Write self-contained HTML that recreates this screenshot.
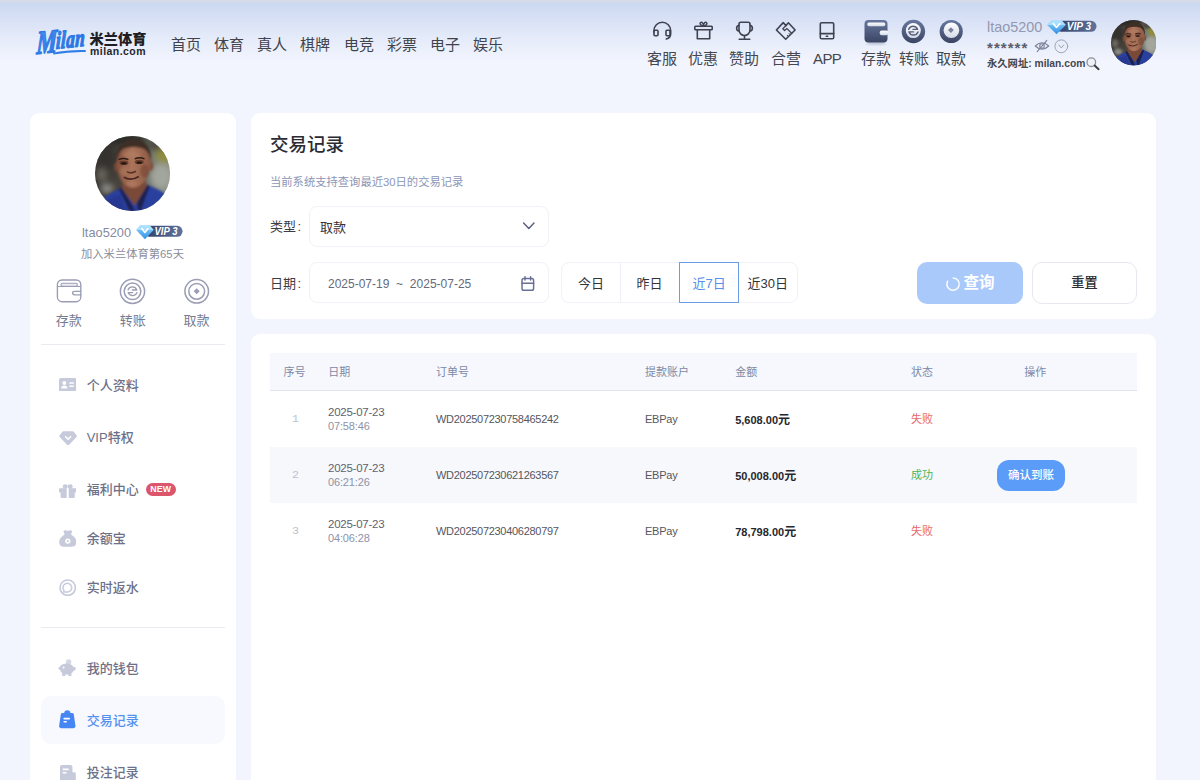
<!DOCTYPE html>
<html lang="zh-CN">
<head>
<meta charset="utf-8">
<title>交易记录</title>
<style>
*{box-sizing:border-box;margin:0;padding:0}
html,body{width:1200px;height:780px;overflow:hidden}
body{position:relative;background:#f2f5fe;font-family:"Liberation Sans","Noto Sans CJK SC",sans-serif;color:#333;font-size:13px}
.abs{position:absolute}
.t{position:absolute;white-space:nowrap;line-height:1}
#hdr{position:absolute;left:0;top:0;width:1200px;height:70px;background:linear-gradient(#cad6f1 0,#d7e0f5 18px,#e5ebf9 38px,#f2f5fe 62px)}
#hdr:before{content:"";position:absolute;left:0;top:0;width:100%;height:4px;background:linear-gradient(#d6dce7 0,#d3dbea 2px,rgba(204,216,242,0) 4px)}
.nav{font-size:15px;color:#42444d;top:36.6px}
.hl{font-size:15px;color:#45474f;top:51px}
.card{position:absolute;background:#fff;border-radius:9px}
.mi{font-size:13px;color:#6c7088;font-weight:500;left:86.7px}
.th{font-size:11px;color:#8089a6}
.td{font-size:11.5px;color:#555}
</style>
</head>
<body>
<div id="hdr"></div>

<!-- NAV -->
<div class="t nav" style="left:171px">首页</div>
<div class="t nav" style="left:214px">体育</div>
<div class="t nav" style="left:257px">真人</div>
<div class="t nav" style="left:300px">棋牌</div>
<div class="t nav" style="left:344px">电竞</div>
<div class="t nav" style="left:387px">彩票</div>
<div class="t nav" style="left:430px">电子</div>
<div class="t nav" style="left:473px">娱乐</div>

<div class="t hl" style="left:647px">客服</div>
<div class="t hl" style="left:688px">优惠</div>
<div class="t hl" style="left:729px">赞助</div>
<div class="t hl" style="left:771px">合营</div>
<div class="t hl" style="left:813px;letter-spacing:-.6px">APP</div>
<div class="t hl" style="left:861px">存款</div>
<div class="t hl" style="left:899px">转账</div>
<div class="t hl" style="left:936px">取款</div>


<!-- shared defs -->
<svg width="0" height="0" style="position:absolute">
<defs>
<filter id="bl1" x="-20%" y="-20%" width="140%" height="140%"><feGaussianBlur stdDeviation="1.6"/></filter>
<filter id="bl2" x="-20%" y="-20%" width="140%" height="140%"><feGaussianBlur stdDeviation="4"/></filter>
<filter id="bl3" x="-20%" y="-20%" width="140%" height="140%"><feGaussianBlur stdDeviation="0.8"/></filter>
<clipPath id="avc"><circle cx="50" cy="50" r="50"/></clipPath>
<linearGradient id="bgA" x1="0" y1="0" x2="1" y2="0"><stop offset="0" stop-color="#33312d"/><stop offset=".35" stop-color="#4a443c"/><stop offset=".7" stop-color="#6f746a"/><stop offset="1" stop-color="#8b9186"/></linearGradient>
<linearGradient id="skin" x1="0" y1="0" x2="1" y2="0"><stop offset="0" stop-color="#82503d"/><stop offset=".45" stop-color="#ab755b"/><stop offset="1" stop-color="#8d5a45"/></linearGradient>
<symbol id="avatar" viewBox="0 0 100 100">
<g clip-path="url(#avc)">
<rect width="100" height="100" fill="url(#bgA)"/>
<g filter="url(#bl2)">
<ellipse cx="92" cy="24" rx="11" ry="13" fill="#8f8d3a"/>
<ellipse cx="88" cy="54" rx="14" ry="17" fill="#a3a69d"/>
<ellipse cx="80" cy="12" rx="12" ry="8" fill="#4b4a42"/>
<ellipse cx="14" cy="30" rx="14" ry="18" fill="#35332f"/>
<ellipse cx="9" cy="52" rx="7" ry="9" fill="#6b675e"/>
<ellipse cx="16" cy="70" rx="9" ry="7" fill="#8b8c88"/>
<ellipse cx="40" cy="5" rx="30" ry="8" fill="#2b2a27"/>
</g>
<g filter="url(#bl1)">
<path d="M-5 105 L6 86 Q18 77 35 69 L50 86 L69 65 Q86 71 96 79 L105 105Z" fill="#2c409f"/>
<path d="M6 92 Q20 82 34 78 L40 100 L0 100Z" fill="#23358b" opacity=".7"/>
<path d="M38 56 L66 54 L69 67 L53 93 L36 70Z" fill="#7a4a37"/>
<path d="M35 68 L50 93 L53 100 L58 100 L56 89 L70 65 L73 67 L61 100 L46 100 L32 71Z" fill="#1a2250"/>
<ellipse cx="28.8" cy="41" rx="3.4" ry="6.2" fill="#774634"/>
<ellipse cx="74.2" cy="40" rx="3.4" ry="6.2" fill="#80503c"/>
<path d="M29 32 Q29 12 51 10 Q73 12 74 32 Q74.5 48 68 58 Q60 69 50.5 69 Q41 69 34 58 Q28.5 48 29 32Z" fill="url(#skin)"/>
<path d="M28.5 36 Q26.5 15 39 7.5 Q51 1.5 63.5 7 Q76 14 75 35 Q72.5 21.5 65 17 Q52 12.5 38 17 Q31 21 28.5 36Z" fill="#3e2f28"/>
<ellipse cx="49" cy="25" rx="12" ry="4.5" fill="#b57f64" opacity=".55"/>
<ellipse cx="39" cy="47" rx="6" ry="6" fill="#b47c62" opacity=".5"/>
<ellipse cx="66" cy="47" rx="6" ry="9" fill="#6f4231" opacity=".5"/>
</g>
<g filter="url(#bl3)">
<ellipse cx="38.5" cy="35.5" rx="6" ry="3" fill="#5d3527" opacity=".8"/>
<ellipse cx="59" cy="34.5" rx="6" ry="3" fill="#5d3527" opacity=".8"/>
<ellipse cx="38.5" cy="36.5" rx="3.8" ry="1.6" fill="#23140f"/>
<ellipse cx="59" cy="35.5" rx="3.8" ry="1.6" fill="#23140f"/>
<path d="M31.5 31.5 Q38 28.5 44.5 31.5" stroke="#2e1c16" stroke-width="2" fill="none"/>
<path d="M53 30.5 Q59.5 27.5 66 30.5" stroke="#2e1c16" stroke-width="2" fill="none"/>
<path d="M42.5 47.5 Q48 51 54.5 47" stroke="#5a3326" stroke-width="2.2" fill="none"/>
<path d="M38.5 55 Q48 60.5 58.5 54" stroke="#4a2820" stroke-width="2.2" fill="none"/>
<ellipse cx="49" cy="63.5" rx="7" ry="2.6" fill="#b27b62" opacity=".45"/>
</g>
</g>
</symbol>
<linearGradient id="gdk" x1="0" y1="0" x2="0" y2="1"><stop offset="0" stop-color="#67779f"/><stop offset="1" stop-color="#3b4563"/></linearGradient>
<linearGradient id="glt" x1="0" y1="0" x2="0" y2="1"><stop offset="0" stop-color="#ffffff"/><stop offset="1" stop-color="#d5dbe8"/></linearGradient>
<linearGradient id="gvip" x1="0" y1="0" x2="1" y2="0"><stop offset="0" stop-color="#31406a"/><stop offset="1" stop-color="#62739b"/></linearGradient>
<linearGradient id="gdia" x1="0" y1="0" x2="0" y2="1"><stop offset="0" stop-color="#8fd6ff"/><stop offset="1" stop-color="#2f8fe6"/></linearGradient>
<linearGradient id="glogo" x1="0" y1="0" x2="1" y2="1"><stop offset="0" stop-color="#4f9bf5"/><stop offset="1" stop-color="#1f5fd6"/></linearGradient>
<symbol id="vip" viewBox="0 0 50 15">
<rect x="9" y="0.8" width="40.5" height="11" rx="5.5" fill="url(#gvip)"/>
<path d="M4.5 0.3 H14.5 L18.8 5 L9.5 14.3 L0.2 5Z" fill="url(#gdia)"/>
<path d="M4.5 0.3 H14.5 L18.8 5 H0.2Z" fill="#b9e6ff" opacity=".75"/>
<path d="M6.3 3.6 L9.5 7.4 L12.7 3.6" stroke="#fff" stroke-width="1.7" fill="none" stroke-linecap="round" stroke-linejoin="round"/>
<text x="31.9" y="10.4" font-family="Liberation Sans,sans-serif" font-size="10.9" font-weight="bold" font-style="italic" fill="#fff" text-anchor="middle" textLength="24.4" lengthAdjust="spacingAndGlyphs">VIP 3</text>
</symbol>
</defs>
</svg>

<!-- LOGO -->
<svg class="abs" style="left:30px;top:20px" width="62" height="44" viewBox="30 20 62 44">
<g transform="translate(36.3 51) rotate(-6) skewX(-8) scale(.7 1)">
<text x="0" y="0" font-family="Liberation Serif,serif" font-style="italic" font-weight="bold" fill="url(#glogo)" stroke="#2f7ae6" stroke-width="1.4" stroke-linejoin="round"><tspan font-size="33" dy="3">M</tspan><tspan font-size="24.5" dy="-3.2" dx="-1.5" letter-spacing=".6">ilan</tspan></text>
</g>
<path d="M53 52.8 Q68 49.5 85.5 50 Q86.3 51 85.6 52 Q70 51.5 53.4 54.6Z" fill="#2f7de8"/>
</svg>
<div class="t" style="left:89.6px;top:31.6px;font-size:14.2px;font-weight:900;color:#1e1f24">米兰体育</div>
<div class="t" style="left:90px;top:45.6px;font-size:10.5px;font-weight:bold;color:#25262b;letter-spacing:.45px">milan.com</div>

<!-- HEADER ICONS -->
<svg class="abs" style="left:652px;top:20px" width="21" height="21" viewBox="0 0 21 21" fill="none" stroke="#3f4250" stroke-width="1.6" stroke-linecap="round" stroke-linejoin="round">
<path d="M1.9 12 V10.7 A8.4 8.4 0 0 1 18.7 10.7 V13.5 Q18.7 18 14.3 19"/>
<rect x="2" y="10.3" width="4" height="5.4" rx="1"/>
<rect x="14" y="10.3" width="4" height="5.4" rx="1"/>
</svg>
<svg class="abs" style="left:693px;top:20px" width="21" height="21" viewBox="0 0 21 21" fill="none" stroke="#3f4250" stroke-width="1.6" stroke-linecap="round" stroke-linejoin="round">
<rect x="1.8" y="6.3" width="17.4" height="3.4" rx=".8"/>
<path d="M4.3 9.7 V18.7 H16.7 V9.7"/>
<path d="M10.5 6 C8 6 5.8 3.2 7.8 2.3 C9.3 1.7 10.5 4 10.5 6 C10.5 4 11.7 1.7 13.2 2.3 C15.2 3.2 13 6 10.5 6Z" stroke-width="1.4"/>
</svg>
<svg class="abs" style="left:734px;top:20px" width="22" height="21" viewBox="0 0 22 21" fill="none" stroke="#3f4250" stroke-width="1.6" stroke-linecap="round" stroke-linejoin="round">
<path d="M6.8 2.3 H14.2 Q16 2.3 16 4 V10 A5.5 5.5 0 0 1 5 10 V4 Q5 2.3 6.8 2.3Z"/>
<path d="M5 5.3 A2.9 2.9 0 0 0 5 11"/>
<path d="M16 5.3 A2.9 2.9 0 0 1 16 11"/>
<path d="M10.5 15.6 V19 M5.2 19.2 H15.8"/>
</svg>
<svg class="abs" style="left:774px;top:20px" width="23" height="21" viewBox="0 0 23 21" fill="none" stroke="#3f4250" stroke-width="1.6" stroke-linecap="round" stroke-linejoin="round">
<path d="M11.7 19.3 L2.4 10 L9.2 2.6 L12 5.6 L14.4 2.8 L21.1 10Z"/>
<path d="M12 5.6 L8.8 8.8 L10.6 10.6 L13 8.6 L17.6 13.2" stroke-width="1.3"/>
<path d="M13.2 15.2 l1 1 M15 13.5 l1 1" stroke-width="1"/>
</svg>
<svg class="abs" style="left:818px;top:20px" width="18" height="21" viewBox="0 0 18 21" fill="none" stroke="#3f4250" stroke-width="1.6" stroke-linecap="round" stroke-linejoin="round">
<rect x="2.3" y="2.8" width="13.4" height="16" rx="1.3"/>
<path d="M2.3 13.6 H15.7"/>
<path d="M8.2 16.3 H9.8" stroke-width="1.4"/>
</svg>

<!-- wallet / transfer / withdraw (filled) -->
<svg class="abs" style="left:860px;top:16px" width="110" height="32" viewBox="0 0 110 32">
<ellipse cx="16" cy="27" rx="10" ry="1.6" fill="#5a6788" opacity=".35" filter="url(#bl3)"/>
<rect x="4.5" y="4" width="23" height="22.5" rx="4" fill="url(#gdk)"/>
<rect x="7.3" y="6.4" width="18" height="3.8" rx="1.6" fill="url(#glt)"/>
<rect x="19.8" y="14.4" width="8.4" height="4.8" rx="1.8" fill="url(#glt)"/>
<circle cx="53.4" cy="15.5" r="11.7" fill="url(#gdk)"/>
<circle cx="53.3" cy="14.6" r="7.5" fill="url(#glt)"/>
<path d="M48.6 13.4 A4.8 4.8 0 0 1 57.6 13.4 H53 M58 15.9 A4.8 4.8 0 0 1 49 15.9 H53.6" stroke="#55607f" stroke-width="1.4" fill="none" stroke-linecap="round" stroke-linejoin="round"/>
<circle cx="91.2" cy="15.5" r="11.6" fill="url(#gdk)"/>
<circle cx="91.4" cy="14.3" r="7.8" fill="url(#glt)"/>
<path d="M90.9 11.2 L93.8 14.1 L90.9 17 L88 14.1Z" fill="#707997" opacity=".9"/>
</svg>

<!-- USER -->
<div class="t" style="left:987px;top:19.8px;font-size:14.4px;color:#9298b0">ltao5200</div>
<svg class="abs" style="left:1046.5px;top:20px" width="50" height="15"><use href="#vip"/></svg>
<div class="t" style="left:987px;top:40.4px;font-size:15px;font-weight:bold;color:#5a5d6c;letter-spacing:1.06px">******</div>
<svg class="abs" style="left:1034px;top:39px" width="16" height="14" viewBox="0 0 16 14" fill="none" stroke="#7c819a" stroke-width="1.1" stroke-linecap="round">
<path d="M1.3 7 Q8 0.5 14.7 7 Q8 13.5 1.3 7Z"/><circle cx="8" cy="7" r="2.3"/><path d="M3.2 12.6 L12.8 1.4"/>
</svg>
<svg class="abs" style="left:1054px;top:39px" width="15" height="15" viewBox="0 0 15 15" fill="none" stroke="#9ea2b5" stroke-width="1" stroke-linecap="round" stroke-linejoin="round">
<circle cx="7.3" cy="7.3" r="6.4"/><path d="M4.9 6 L7.3 9 L9.7 6"/>
</svg>
<div class="t" style="left:987px;top:58.5px;font-size:10.3px;font-weight:bold;color:#45464e">永久网址: milan.com</div>
<svg class="abs" style="left:1085px;top:56px" width="16" height="15" viewBox="0 0 16 15" fill="none">
<circle cx="6.3" cy="6.2" r="4.3" stroke="#8e9097" stroke-width="1.3" fill="#eef1f8"/>
<path d="M9.6 9.6 L13.6 13.2" stroke="#3c3d42" stroke-width="2" stroke-linecap="round"/>
</svg>
<svg class="abs" style="left:1110.6px;top:20.4px" width="45.4" height="45.4"><use href="#avatar"/></svg>

<!-- SIDEBAR -->
<div class="card" id="side" style="left:30px;top:113.3px;width:205.5px;height:700px"></div>
<svg class="abs" style="left:94.8px;top:136.1px" width="75" height="75"><use href="#avatar"/></svg>
<div class="t" style="left:82px;top:226.8px;font-size:12.8px;color:#868ba0">ltao5200</div>
<svg class="abs" style="left:136.3px;top:225.3px" width="47" height="15" viewBox="0 0 50 15" preserveAspectRatio="none"><use href="#vip"/></svg>
<div class="t" style="left:81px;top:249px;font-size:11.3px;color:#8a8d9d">加入米兰体育第65天</div>

<svg class="abs" style="left:55px;top:277px" width="28" height="28" viewBox="0 0 28 28" fill="none" stroke="#9a9db4" stroke-width="1.35" stroke-linecap="round" stroke-linejoin="round">
<rect x="2.4" y="3" width="23.4" height="21.7" rx="4.6"/>
<rect x="6" y="6.3" width="16.4" height="3" rx="1.5" fill="#eceef4" stroke-width="1.1"/>
<path d="M2.6 9.5 H25.6" stroke-width="1.1"/>
<path d="M25.8 14.3 H19.6 Q17.6 14.3 17.6 16.1 Q17.6 17.9 19.6 17.9 H25.8"/>
</svg>
<svg class="abs" style="left:118px;top:277px" width="29" height="29" viewBox="0 0 29 29" fill="none" stroke="#9a9db4" stroke-width="1.5" stroke-linecap="round" stroke-linejoin="round">
<circle cx="14.5" cy="14.3" r="12.1"/><circle cx="14.5" cy="14.3" r="8.3"/>
<path d="M10 13 A4.7 4.7 0 0 1 18.8 13 H14.3 M19 15.6 A4.7 4.7 0 0 1 10.2 15.6 H14.7" stroke-width="1.3"/>
</svg>
<svg class="abs" style="left:182px;top:277px" width="29" height="29" viewBox="0 0 29 29" fill="none" stroke="#9a9db4" stroke-width="1.5" stroke-linecap="round" stroke-linejoin="round">
<circle cx="14.7" cy="14.3" r="11.8"/><circle cx="14.7" cy="14.3" r="7.9"/>
<path d="M14.7 11.3 L17.7 14.3 L14.7 17.3 L11.7 14.3Z" fill="#9a9db4" stroke="none"/>
</svg>
<div class="t" style="left:55.8px;top:313.5px;font-size:13px;color:#777b90">存款</div>
<div class="t" style="left:119.8px;top:313.5px;font-size:13px;color:#777b90">转账</div>
<div class="t" style="left:183.6px;top:313.5px;font-size:13px;color:#777b90">取款</div>
<div class="abs" style="left:41px;top:344px;width:184px;height:1px;background:#e9ebf1"></div>

<!-- menu icons -->
<svg class="abs" style="left:58.8px;top:377.9px" width="17.4" height="13.6" viewBox="0 0 17.4 13.6">
<rect width="17.4" height="13.6" rx="1.8" fill="#c6cadb"/>
<circle cx="5.3" cy="5" r="1.9" fill="#fff"/><path d="M2.2 10.6 Q2.2 7.6 5.3 7.6 Q8.4 7.6 8.4 10.6Z" fill="#fff"/>
<rect x="10.3" y="4.3" width="4.6" height="1.5" rx=".5" fill="#fff"/><rect x="10.3" y="7.6" width="4.6" height="1.5" rx=".5" fill="#fff"/>
</svg>
<svg class="abs" style="left:58.5px;top:430.6px" width="18.2" height="14.8" viewBox="0 0 18.2 14.8">
<path d="M4.4 0.3 H13.8 Q14.5 0.3 15 .9 L17.7 4.6 Q18.2 5.4 17.5 6.1 L10 14 Q9.1 14.8 8.2 14 L.7 6.1 Q0 5.4 .5 4.6 L3.2 .9 Q3.7 .3 4.4 .3Z" fill="#c6cadb"/>
<path d="M6.6 5.7 L9.1 8.3 L11.6 5.7" stroke="#fff" stroke-width="1.6" fill="none" stroke-linecap="round" stroke-linejoin="round"/>
</svg>
<svg class="abs" style="left:59px;top:483.6px" width="17.4" height="14.4" viewBox="0 0 17.4 14.4">
<path d="M0.8 4.3 H7.7 V14.2 H3 Q1.6 14.2 1.6 12.8 V8.6 H.8 Q0 8.6 0 7.8 V5.1 Q0 4.3 .8 4.3Z M9.7 4.3 H16.6 Q17.4 4.3 17.4 5.1 V7.8 Q17.4 8.6 16.6 8.6 H15.8 V12.8 Q15.8 14.2 14.4 14.2 H9.7Z" fill="#c6cadb"/>
<ellipse cx="6.2" cy="2.5" rx="2.5" ry="2.3" fill="#c6cadb"/><ellipse cx="11.2" cy="2.5" rx="2.5" ry="2.3" fill="#c6cadb"/>
</svg>
<div class="abs" style="left:146.3px;top:482.9px;width:30px;height:13.1px;border-radius:7px;background:#db566b"></div>
<div class="t" style="left:150.3px;top:485.2px;font-size:8.8px;font-weight:bold;color:#fff;letter-spacing:.1px">NEW</div>
<svg class="abs" style="left:58.6px;top:529.6px" width="17.6" height="17" viewBox="0 0 17.6 17">
<path d="M5.6 4.4 L4.6 1.8 Q4.2 .5 5.6 .4 Q7.2 .2 8.8 .9 Q10.4 .2 12 .4 Q13.4 .5 13 1.8 L12 4.4 Q17.6 7.6 17.4 12.2 Q17.2 16.8 12.6 16.8 H5 Q.4 16.8 .2 12.2 Q0 7.6 5.6 4.4Z" fill="#c6cadb"/>
<circle cx="8.8" cy="11.1" r="2.7" fill="#fff"/><circle cx="8.8" cy="11.1" r="1" fill="#c6cadb"/>
</svg>
<svg class="abs" style="left:59px;top:578.6px" width="17.4" height="17.4" viewBox="0 0 17.4 17.4" fill="none" stroke="#c6cadb">
<circle cx="8.7" cy="8.7" r="7.7" stroke-width="1.6"/>
<path d="M5 11.6 A4.4 4.4 0 1 1 8.7 13.1 H4.4" stroke-width="1.5" stroke-linecap="round" stroke-linejoin="round"/>
</svg>
<div class="t mi" style="top:378.9px">个人资料</div>
<div class="t mi" style="top:431px">VIP特权</div>
<div class="t mi" style="top:482.8px">福利中心</div>
<div class="t mi" style="top:532.3px">余额宝</div>
<div class="t mi" style="top:581.3px">实时返水</div>
<div class="abs" style="left:41px;top:626.5px;width:184px;height:1px;background:#e9ebf1"></div>

<svg class="abs" style="left:58.4px;top:658.6px" width="17.8" height="17.6" viewBox="0 0 17.8 17.6">
<circle cx="10.6" cy="2.9" r="2.7" fill="#d4d7e4"/>
<path d="M3 6.2 Q5 4.4 8.6 4.4 Q12.4 4.4 14.4 6.6 L15.4 8 H16.8 Q17.6 8 17.6 8.8 V10.6 Q17.6 11.4 16.8 11.4 H15.6 Q15 13.2 13.4 14.3 V16.4 Q13.4 17.2 12.6 17.2 H11.2 Q10.4 17.2 10.4 16.4 V15.5 H7.2 V16.4 Q7.2 17.2 6.4 17.2 H5 Q4.2 17.2 4.2 16.4 V14.2 Q2.6 13 2.2 11 L.6 9.9 Q0 9.5 .4 8.9 L1.8 7.7 Q2.2 6.9 3 6.2Z" fill="#c6cadb"/>
<circle cx="5.6" cy="8.5" r=".9" fill="#fff"/>
</svg>
<div class="abs" style="left:41px;top:696px;width:184px;height:48.4px;border-radius:10px;background:#f7f9fe"></div>
<svg class="abs" style="left:59.2px;top:710.2px" width="16.6" height="18.4" viewBox="0 0 16.6 18.4">
<path d="M5.2 3 Q5.4 .2 8.3 .2 Q11.2 .2 11.4 3 H13.2 Q14.6 3 14.8 4.4 L16.5 16 Q16.7 18.2 14.6 18.2 H2 Q-.1 18.2 .1 16 L1.8 4.4 Q2 3 3.4 3Z" fill="#4586f3"/>
<rect x="4.4" y="7.8" width="6.6" height="1.7" rx=".8" fill="#fff"/><rect x="4.4" y="10.9" width="3.6" height="1.7" rx=".8" fill="#fff"/>
</svg>
<svg class="abs" style="left:59.6px;top:765.4px" width="16" height="16" viewBox="0 0 16 16">
<path d="M1.8 0 H10.6 Q12.4 0 12.4 1.8 V7.2 H14.4 Q15.8 7.2 15.8 8.6 V16 H0 V1.8 Q0 0 1.8 0Z" fill="#c6cadb"/>
<rect x="2.6" y="3.6" width="6.2" height="1.6" rx=".6" fill="#fff"/><rect x="2.6" y="7" width="4" height="1.6" rx=".6" fill="#fff"/>
</svg>
<div class="t mi" style="top:661.5px">我的钱包</div>
<div class="t mi" style="top:713.8px;color:#5590f0">交易记录</div>
<div class="t mi" style="top:766.3px">投注记录</div>

<!-- MAIN CARD 1 -->
<div class="card" id="c1" style="left:250.5px;top:113.3px;width:905.5px;height:205.7px"></div>
<div class="t" style="left:270px;top:135.5px;font-size:18.5px;font-weight:500;color:#2b2c33">交易记录</div>
<div class="t" style="left:270px;top:177.2px;font-size:11.3px;color:#8c96b6">当前系统支持查询最近30日的交易记录</div>
<div class="t" style="left:270px;top:220px;font-size:13px;color:#3c3d45">类型<span style="margin-left:1.5px">:</span></div>
<div class="abs" style="left:309px;top:206px;width:240px;height:40.5px;border:1px solid #f0f2f8;border-radius:8px;background:#fff"></div>
<div class="t" style="left:320px;top:220.5px;font-size:13px;color:#33343a">取款</div>
<svg class="abs" style="left:521px;top:220px" width="16" height="12" viewBox="0 0 16 12" fill="none" stroke="#5b6183" stroke-width="1.5" stroke-linecap="round" stroke-linejoin="round"><path d="M2.6 3 L7.8 8.4 L13 3"/></svg>
<div class="t" style="left:270px;top:276.5px;font-size:13px;color:#3c3d45">日期<span style="margin-left:1.5px">:</span></div>
<div class="abs" style="left:309px;top:262.2px;width:240px;height:41.2px;border:1px solid #f0f2f8;border-radius:8px;background:#fff"></div>
<div class="t" style="left:328px;top:278px;font-size:12px;color:#666a7a;word-spacing:3.4px">2025-07-19 ~ 2025-07-25</div>
<svg class="abs" style="left:520px;top:274.8px" width="16" height="18" viewBox="0 0 16 18" fill="none" stroke="#6a7098" stroke-width="1.5" stroke-linecap="round" stroke-linejoin="round">
<rect x="2" y="3.6" width="11.6" height="11.6" rx="1.8"/><path d="M2 8.2 H13.6 M5 1.8 V5 M10.6 1.8 V5"/>
</svg>
<div class="abs" style="left:561px;top:262.2px;width:237px;height:41.2px;border:1px solid #f0f2f8;border-radius:8px;background:#fff"></div>
<div class="abs" style="left:620px;top:263px;width:1px;height:39.5px;background:#eef0f6"></div>
<div class="abs" style="left:679px;top:262.2px;width:60px;height:41.2px;border:1px solid #6b9de6;background:#fff"></div>
<div class="t" style="left:578px;top:277.4px;font-size:13px;color:#33343a">今日</div>
<div class="t" style="left:636.5px;top:277.4px;font-size:13px;color:#33343a">昨日</div>
<div class="t" style="left:692.5px;top:277.4px;font-size:13px;color:#5590ea">近7日</div>
<div class="t" style="left:747.5px;top:277.4px;font-size:13px;color:#33343a">近30日</div>
<div class="abs" style="left:917px;top:262px;width:105.5px;height:41.5px;border-radius:10px;background:#a9c9fb"></div>
<svg class="abs" style="left:945px;top:275.5px" width="16" height="16" viewBox="0 0 16 16" fill="none" stroke="#fff" stroke-width="1.5" stroke-linecap="round"><path d="M8.2 1.9 A6.2 6.2 0 1 1 2.6 5.2" opacity=".95"/></svg>
<div class="t" style="left:963.5px;top:275px;font-size:15.5px;font-weight:bold;color:#fff">查询</div>
<div class="abs" style="left:1032px;top:262px;width:105px;height:41.5px;border:1px solid #e6e8ef;border-radius:10px;background:#fff"></div>
<div class="t" style="left:1071.3px;top:276px;font-size:13.2px;font-weight:500;color:#2e2f35">重置</div>

<!-- MAIN CARD 2 -->
<div class="card" id="c2" style="left:250.5px;top:333.5px;width:905.5px;height:500px"></div>
<div class="abs" style="left:269.5px;top:352.5px;width:867.5px;height:38px;background:#f6f8fd;border-bottom:1px solid #dfe4ef"></div>
<div class="abs" style="left:269.5px;top:446.5px;width:867.5px;height:56px;background:#f7f8fc"></div>
<div class="t th" style="left:283.4px;top:366.5px">序号</div>
<div class="t th" style="left:328.3px;top:366.5px">日期</div>
<div class="t th" style="left:436px;top:366.5px">订单号</div>
<div class="t th" style="left:645px;top:366.5px">提款账户</div>
<div class="t th" style="left:735.2px;top:366.5px">金额</div>
<div class="t th" style="left:911px;top:366.5px">状态</div>
<div class="t th" style="left:1024.3px;top:366.5px">操作</div>
<div class="t" style="left:292px;top:413.2px;font-size:11.5px;color:#bcc0cf;font-family:'Liberation Mono','Liberation Sans',monospace">1</div>
<div class="t td" style="left:328px;top:406.6px;letter-spacing:-.25px;color:#5f6270">2025-07-23</div>
<div class="t td" style="left:328px;top:421.1px;font-size:11px;letter-spacing:-.15px;color:#8d92a9">07:58:46</div>
<div class="t td" style="left:436px;top:413.9px;font-size:11px;letter-spacing:-.29px;color:#55565e">WD202507230758465242</div>
<div class="t td" style="left:645px;top:413.9px;font-size:11px;letter-spacing:-.25px;color:#55565e">EBPay</div>
<div class="t" style="left:735.2px;top:414.0px;font-size:11px;font-weight:bold;color:#26272c">5,608.00<span style="font-size:12px">元</span></div>
<div class="t" style="left:911px;top:414.3px;font-size:11px;color:#e8686b">失败</div>
<div class="t" style="left:292px;top:469.2px;font-size:11.5px;color:#bcc0cf;font-family:'Liberation Mono','Liberation Sans',monospace">2</div>
<div class="t td" style="left:328px;top:462.6px;letter-spacing:-.25px;color:#5f6270">2025-07-23</div>
<div class="t td" style="left:328px;top:477.1px;font-size:11px;letter-spacing:-.15px;color:#8d92a9">06:21:26</div>
<div class="t td" style="left:436px;top:469.9px;font-size:11px;letter-spacing:-.29px;color:#55565e">WD202507230621263567</div>
<div class="t td" style="left:645px;top:469.9px;font-size:11px;letter-spacing:-.25px;color:#55565e">EBPay</div>
<div class="t" style="left:735.2px;top:470.0px;font-size:11px;font-weight:bold;color:#26272c">50,008.00<span style="font-size:12px">元</span></div>
<div class="t" style="left:911px;top:470.3px;font-size:11px;color:#4cb35a">成功</div>
<div class="t" style="left:292px;top:525.2px;font-size:11.5px;color:#bcc0cf;font-family:'Liberation Mono','Liberation Sans',monospace">3</div>
<div class="t td" style="left:328px;top:518.6px;letter-spacing:-.25px;color:#5f6270">2025-07-23</div>
<div class="t td" style="left:328px;top:533.1px;font-size:11px;letter-spacing:-.15px;color:#8d92a9">04:06:28</div>
<div class="t td" style="left:436px;top:525.9px;font-size:11px;letter-spacing:-.29px;color:#55565e">WD202507230406280797</div>
<div class="t td" style="left:645px;top:525.9px;font-size:11px;letter-spacing:-.25px;color:#55565e">EBPay</div>
<div class="t" style="left:735.2px;top:526.0px;font-size:11px;font-weight:bold;color:#26272c">78,798.00<span style="font-size:12px">元</span></div>
<div class="t" style="left:911px;top:526.3px;font-size:11px;color:#e8686b">失败</div>
<div class="abs" style="left:997px;top:459.5px;width:68px;height:31px;border-radius:12px;background:#5b9cf8"></div>
<div class="t" style="left:1008px;top:469.9px;font-size:11.5px;font-weight:500;color:#fff;letter-spacing:0">确认到账</div>

</body>
</html>
